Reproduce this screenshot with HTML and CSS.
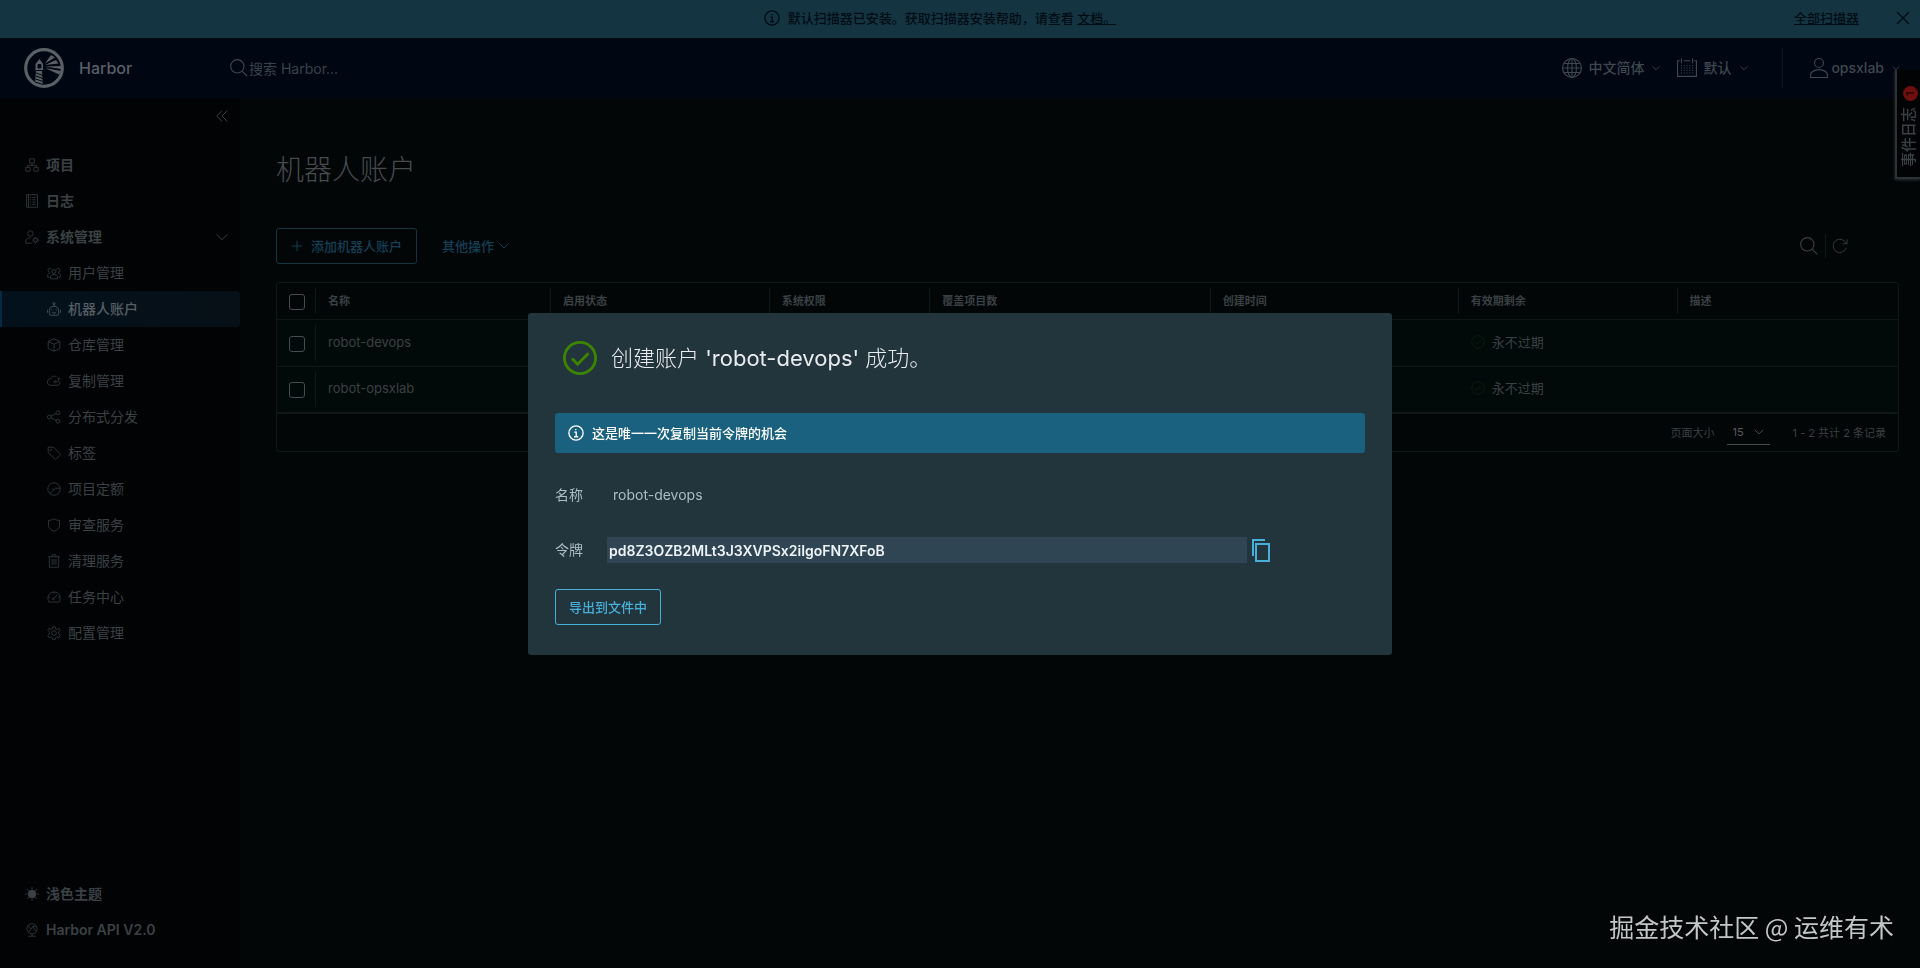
FILE: index.html
```html
<!DOCTYPE html>
<html lang="zh-CN">
<head>
    <meta charset="UTF-8">
    <meta name="viewport" content="width=device-width, initial-scale=1.0">
    <title>Harbor</title>
    <link rel="stylesheet" href="styles.css">
</head>
<body>
    <!-- Scanner notice -->
    <div class="banner">
        <p class="banner-text">
            <svg class="icon icon-16 icon-bold" viewBox="0 0 36 36"><circle cx="18" cy="18" r="16"/><path d="M14 16h4.500v10M13.500 26.500h9.500M17.500 9v3"/></svg>
            <span>默认扫描器已安装。获取扫描器安装帮助，请查看 <a href="#">文档。</a></span>
        </p>
        <a class="banner-link" href="#">全部扫描器</a>
        <button class="banner-close" aria-label="关闭"><svg class="icon icon-16 icon-bold" viewBox="0 0 36 36"><path d="M5 5l26 26M31 5L5 31"/></svg></button>
    </div>

    <header class="header">
        <a class="brand" href="#">
            <svg class="logo" viewBox="0 0 40 40">
                <circle cx="20" cy="20" r="18.300" fill="none" stroke="currentColor" stroke-width="3.200"/>
                <path fill="currentColor" d="M11.500 16l4-5 3.500 5v7h-1l1 15-8-3 1-12h-.500zM21 15.500l6-8.500 4 2.500zM21 17l11-5 2.500 3.500zM21 18.500l16-.500v3zM21 20l16 3-2 3.500z"/>
                <path class="logo-cut" d="M14 16.500h3v3.500h-3zM12 25l7 2.500M12 28l7 2.500M11.500 31l7.500 2.500M11 34l8 2.500M12 22.500h7"/>
            </svg>
            <span>Harbor</span>
        </a>
        <label class="search">
            <svg class="icon icon-20" viewBox="0 0 36 36"><circle cx="15" cy="15" r="12"/><path d="M24 24l9 9"/></svg>
            <input type="text" placeholder="搜索 Harbor..." aria-label="搜索">
        </label>
        <nav class="header-actions">
            <button class="header-btn">
                <svg class="icon icon-20" viewBox="0 0 36 36"><circle cx="18" cy="18" r="17"/><ellipse cx="18" cy="18" rx="8" ry="17"/><path d="M18 1v34M1 18h34M4 10h28M4 26h28"/></svg>
                <span>中文简体</span>
                <svg class="icon icon-8" viewBox="0 0 36 36"><path d="M3 11l15 15 15-15"/></svg>
            </button>
            <button class="header-btn header-btn-date">
                <svg class="icon icon-20" viewBox="0 0 36 36"><path d="M5 5H1v28h34V5h-4M12 5h12M8 1v8M28 1v8"/><path stroke-dasharray="2 3" d="M7 14h23M7 18h23M7 22h23M7 27h23"/></svg>
                <span>默认</span>
                <svg class="icon icon-8" viewBox="0 0 36 36"><path d="M3 11l15 15 15-15"/></svg>
            </button>
            <button class="header-btn header-user">
                <svg class="icon icon-20" viewBox="0 0 36 36"><circle cx="18" cy="9" r="8"/><path d="M3 35v-7c4-5 9-7 15-7s11 2 15 7v7z"/></svg>
                <span>opsxlab</span>
                <svg class="icon icon-8" viewBox="0 0 36 36"><path d="M3 11l15 15 15-15"/></svg>
            </button>
        </nav>
    </header>

    <div class="layout">
        <aside class="sidebar">
            <button class="collapse" aria-label="收起"><svg class="icon icon-12" viewBox="0 0 36 36"><path d="M18 2L2 18l16 16M34 2L18 18l16 16"/></svg></button>
            <nav class="nav">
                <a class="nav-item" href="#"><svg class="icon icon-14" viewBox="0 0 36 36"><path d="M12 2h12v11H12zM2 24h11v10H2zM23 24h11v10H23zM18 13v6M7 24v-5h22v5"/></svg>项目</a>
                <a class="nav-item" href="#"><svg class="icon icon-14" viewBox="0 0 36 36"><path d="M4 2h28v32H4zM9 2v32M13 9h3M19 9h8M13 15h3M19 15h8M13 21h3M19 21h8M13 27h3M19 27h8"/></svg>日志</a>
                <button class="nav-item nav-group">
                    <svg class="icon icon-14" viewBox="0 0 36 36"><circle cx="14" cy="9" r="7"/><path d="M17 34H2v-8c3-4 7-6 13-6"/><circle cx="27" cy="26" r="5"/><path d="M27 18v3M27 31v4M19 26h3M32 26h4M21 20l3 3M30 29l3 3M33 20l-3 3M24 29l-3 3"/></svg>系统管理
                    <svg class="icon icon-12 nav-caret" viewBox="0 0 36 36"><path d="M2 10l16 16 16-16"/></svg>
                </button>
                <a class="nav-item nav-sub" href="#"><svg class="icon icon-14" viewBox="0 0 36 36"><circle cx="18" cy="14" r="5"/><path d="M9 33v-6c2-3 5-5 9-5s7 2 9 5v6zM12 9a5 5 0 1 0-5 7M24 9a5 5 0 1 1 5 7M6 29H2v-7c1-2 3-4 6-4M30 29h4v-7c-1-2-3-4-6-4"/></svg>用户管理</a>
                <a class="nav-item nav-sub active" href="#"><svg class="icon icon-14" viewBox="0 0 36 36"><circle cx="18" cy="4" r="2.500"/><path d="M18 6v5M6 30V22C6 15 11 11 18 11s12 4 12 11v8q0 4-4 4H10q-4 0-4-4zM1 20v8M35 20v8M13 27q5 4 10 0"/><path d="M12 19v3M24 19v3"/></svg>机器人账户</a>
                <a class="nav-item nav-sub" href="#"><svg class="icon icon-14" viewBox="0 0 36 36"><path d="M18 2l15 7v18l-15 7-15-7V9zM3 9l15 7 15-7M18 16v18"/></svg>仓库管理</a>
                <a class="nav-item nav-sub" href="#"><svg class="icon icon-14" viewBox="0 0 36 36"><path d="M25 9C22 4 13 4 10 12c-5 0-9 4-9 9 0 4 3 8 8 8h17c5 0 8-4 7-9M18 20h8q4 0 4-4v-4M22 16l-4 4 4 4M27 14l4-4 4 4"/></svg>复制管理</a>
                <a class="nav-item nav-sub" href="#"><svg class="icon icon-14" viewBox="0 0 36 36"><circle cx="6" cy="18" r="5"/><circle cx="28" cy="7" r="5"/><circle cx="28" cy="29" r="5"/><path d="M10 16l14-7M10 20l14 7"/></svg>分布式分发</a>
                <a class="nav-item nav-sub" href="#"><svg class="icon icon-14" viewBox="0 0 36 36"><path d="M3 3h14l16 17q2 2 0 4l-9 9q-2 2-4 0L3 17z"/><circle cx="10" cy="10" r="1.500"/></svg>标签</a>
                <a class="nav-item nav-sub" href="#"><svg class="icon icon-14" viewBox="0 0 36 36"><circle cx="18" cy="18" r="16"/><path d="M34 16H22L8 29M18 20l-4-3"/></svg>项目定额</a>
                <a class="nav-item nav-sub" href="#"><svg class="icon icon-14" viewBox="0 0 36 36"><path d="M18 2c4 3 9 4 14 4v13c0 7-6 12-14 15C10 31 4 26 4 19V6c5 0 10-1 14-4z"/></svg>审查服务</a>
                <a class="nav-item nav-sub" href="#"><svg class="icon icon-14" viewBox="0 0 36 36"><path d="M3 7h30M6 7v27h24V7M13 7V2h10v5M13 13v15M18 13v15M23 13v15"/></svg>清理服务</a>
                <a class="nav-item nav-sub" href="#"><svg class="icon icon-14" viewBox="0 0 36 36"><path d="M5 31C-2 19 5 5 18 5s20 14 13 26zM17 22l9-9M18 5v4M3 19h4M29 19h4"/><circle cx="16" cy="23" r="2"/></svg>任务中心</a>
                <a class="nav-item nav-sub" href="#"><svg class="icon icon-14" viewBox="0 0 36 36"><circle cx="18" cy="18" r="6"/><path d="M15 2h6l1 5 4 2 5-3 3 5-4 4v5l4 4-3 6-5-2-4 2-1 5h-6l-1-5-4-2-5 2-3-6 4-4v-5l-4-4 3-5 5 3 4-2z"/></svg>配置管理</a>
            </nav>
            <nav class="nav nav-bottom">
                <a class="nav-item" href="#"><svg class="icon icon-14" viewBox="0 0 36 36"><circle cx="18" cy="18" r="10" fill="currentColor"/><path d="M18 0v6M18 30v6M0 18h6M30 18h6M5 5l5 5M26 26l5 5M31 5l-5 5M10 26l-5 5"/></svg>浅色主题</a>
                <a class="nav-item" href="#"><svg class="icon icon-14" viewBox="0 0 36 36"><circle cx="18" cy="15" r="13"/><path d="M8 34h20M18 28v6M8 7l8 8 4-6 8 12M16 15l-6 9M20 9l9-1"/></svg>Harbor API V2.0</a>
            </nav>
        </aside>

        <main class="content">
            <h1>机器人账户</h1>
            <div class="toolbar">
                <button class="btn btn-dim"><svg class="icon icon-12" viewBox="0 0 36 36"><path d="M18 2v32M2 18h32"/></svg>添加机器人账户</button>
                <button class="btn-link">其他操作<svg class="icon icon-12" viewBox="0 0 36 36"><path d="M4 10l14 14 14-14"/></svg></button>
                <div class="tools">
                    <button aria-label="搜索"><svg class="icon icon-20" viewBox="0 0 36 36"><circle cx="15" cy="15" r="12"/><path d="M24 24l9 9"/></svg></button>
                    <button aria-label="刷新"><svg class="icon icon-16" viewBox="0 0 36 36"><path d="M32 22A15 15 0 1 1 29 8l4 5M34 3v10H24"/></svg></button>
                </div>
            </div>

            <div class="datagrid">
                <table>
                    <colgroup>
                        <col class="col-check"><col class="col-name"><col class="col-state"><col class="col-perm">
                        <col class="col-count"><col class="col-time"><col class="col-expire"><col>
                    </colgroup>
                    <thead>
                        <tr>
                            <th><input type="checkbox" aria-label="全选"></th>
                            <th>名称</th>
                            <th>启用状态</th>
                            <th>系统权限</th>
                            <th>覆盖项目数</th>
                            <th>创建时间</th>
                            <th>有效期剩余</th>
                            <th>描述</th>
                        </tr>
                    </thead>
                    <tbody>
                        <tr>
                            <td><input type="checkbox" aria-label="robot-devops"></td>
                            <td>robot-devops</td>
                            <td></td><td></td><td></td><td></td>
                            <td><span class="expire"><svg class="icon icon-14" viewBox="0 0 36 36"><circle cx="18" cy="18" r="16"/><path d="M10 19l5 5 11-11"/></svg>永不过期</span></td>
                            <td></td>
                        </tr>
                        <tr>
                            <td><input type="checkbox" aria-label="robot-opsxlab"></td>
                            <td>robot-opsxlab</td>
                            <td></td><td></td><td></td><td></td>
                            <td><span class="expire"><svg class="icon icon-14" viewBox="0 0 36 36"><circle cx="18" cy="18" r="16"/><path d="M10 19l5 5 11-11"/></svg>永不过期</span></td>
                            <td></td>
                        </tr>
                    </tbody>
                </table>
                <div class="pagination">
                    <label for="page-size">页面大小</label>
                    <span class="select">
                        <select id="page-size"><option>15</option></select>
                        <svg class="icon icon-10" viewBox="0 0 36 36"><path d="M3 10l15 15 15-15"/></svg>
                    </span>
                    <span>1 - 2 共计 2 条记录</span>
                </div>
            </div>
        </main>
    </div>

    <button class="event-tab"><span class="event-text">事件日志</span><span class="event-badge">1</span></button>

    <!-- Token dialog -->
    <div class="backdrop">
        <div class="modal" role="dialog" aria-modal="true" aria-labelledby="modal-title">
            <div class="modal-header">
                <svg class="icon success" viewBox="0 0 36 36"><circle cx="18" cy="18" r="16.500"/><path d="M9.500 18.500l6 6L27 13"/></svg>
                <h2 id="modal-title">创建账户 <span class="account">'robot-devops'</span> 成功。</h2>
            </div>
            <div class="alert">
                <svg class="icon icon-16 icon-bold" viewBox="0 0 36 36"><circle cx="18" cy="18" r="16"/><path d="M14 16h4.500v10M13.500 26.500h9.500M17.500 9v3"/></svg>
                <span>这是唯一一次复制当前令牌的机会</span>
            </div>
            <div class="field">
                <span class="field-label">名称</span>
                <span class="field-value">robot-devops</span>
            </div>
            <div class="field">
                <label class="field-label" for="token">令牌</label>
                <input class="token" id="token" type="text" readonly value="pd8Z3OZB2MLt3J3XVPSx2iIgoFN7XFoB">
                <button class="copy" aria-label="复制"><svg class="icon" viewBox="0 0 20 24"><path d="M2 18V2h12M5 6h13v17H5z"/></svg></button>
            </div>
            <button class="btn">导出到文件中</button>
        </div>
    </div>

    <div class="watermark">掘金技术社区 @ 运维有术</div>
</body>
</html>
```

FILE: styles.css
```css
* {
    margin: 0;
    padding: 0;
    box-sizing: border-box;
}
body {
    display: flex;
    flex-direction: column;
    min-height: 100vh;
    background: #020607;
    color: #3a4144;
    font-family: Inter, "Noto Sans CJK SC", sans-serif;
    font-size: 14px;
    line-height: 20px;
}
button, input, select {
    font: inherit;
    color: inherit;
    background: none;
    border: none;
    outline: none;
}
button {
    cursor: pointer;
}
a {
    color: inherit;
    text-decoration: none;
}
.icon {
    flex: none;
    fill: none;
    stroke: currentColor;
    stroke-width: 2;
}
.icon-bold { stroke-width: 3; }
.icon-8 { width: 8px; height: 8px; stroke-width: 4; }
.icon-10 { width: 10px; height: 10px; stroke-width: 3; }
.icon-12 { width: 12px; height: 12px; stroke-width: 3; }
.icon-14 { width: 14px; height: 14px; }
.icon-16 { width: 16px; height: 16px; }
.icon-20 { width: 20px; height: 20px; }

/* banner */
.banner {
    display: grid;
    grid-template-columns: 1fr auto 1fr 40px;
    align-items: center;
    height: 38px;
    padding-bottom: 2px;
    background: #143442;
    color: #000c14;
    font-size: 13px;
    font-weight: 500;
}
.banner-text {
    grid-column: 2;
    display: flex;
    align-items: center;
    gap: 8px;
}
.banner a {
    text-decoration: underline;
}
.banner-link {
    justify-self: end;
    margin-right: 21px;
}
.banner-close {
    display: flex;
    justify-content: center;
    justify-self: end;
    width: 34px;
}

/* header */
.header {
    display: flex;
    align-items: center;
    height: 60px;
    padding-left: 24px;
    background: #000612;
    color: #3f474f;
}
.brand {
    display: flex;
    align-items: center;
    gap: 15px;
    width: 205px;
    color: #596066;
    font-size: 16px;
    font-weight: 500;
}
.logo {
    width: 40px;
    height: 40px;
}
.logo-cut {
    fill: #000612;
    stroke: #000612;
}
.search {
    display: flex;
    align-items: center;
    flex: 1;
}
.search input {
    width: 240px;
    padding-top: 2px;
}
.search input::placeholder {
    color: #3a424a;
}
.header-actions {
    display: flex;
    align-items: center;
}
.header-btn {
    display: flex;
    align-items: center;
    gap: 6px;
    height: 40px;
    font-weight: 500;
}
.header-btn .icon-8 {
    margin-left: 2px;
}
.header-btn-date {
    margin-left: 17px;
    padding-right: 34px;
}
.header-btn-date span {
    margin-right: 1px;
}
.header-user {
    gap: 2px;
    padding: 0 20px 0 26px;
    border-left: 1px solid #10161f;
}
.header-user .icon-8 {
    margin-left: 6px;
}

/* sidebar */
.layout {
    display: flex;
    flex: 1;
}
.sidebar {
    display: flex;
    flex-direction: column;
    width: 240px;
    padding-bottom: 20px;
    background: #010304;
}
.collapse {
    display: flex;
    align-self: flex-end;
    padding: 12px;
    margin-bottom: 13px;
}
.nav-item {
    display: flex;
    align-items: center;
    gap: 7px;
    width: 100%;
    height: 36px;
    padding: 0 12px 0 25px;
    font-weight: 600;
    text-align: left;
}
.nav-caret {
    margin-left: auto;
}
.nav-sub {
    padding-left: 47px;
    font-weight: 400;
}
.nav-sub.active {
    background: linear-gradient(90deg, #03111c, #071017);
    border-radius: 0 4px 4px 0;
    box-shadow: inset 2px 0 #052a42;
    color: #555e64;
    font-weight: 500;
}
.nav-bottom {
    margin-top: auto;
}

/* content */
.content {
    flex: 1;
    padding: 52px 21px 24px 36px;
}
h1 {
    color: #454b4e;
    font-size: 28px;
    font-weight: 300;
    line-height: 40px;
}
.toolbar {
    display: flex;
    align-items: center;
    margin: 38px 0 18px;
}
.btn {
    display: inline-flex;
    align-items: center;
    gap: 8px;
    height: 36px;
    padding: 0 13px;
    border: 1px solid #49afd9;
    border-radius: 3px;
    color: #49afd9;
    font-size: 13px;
    font-weight: 500;
}
.btn-dim {
    padding: 0 14px;
    border-color: #153441;
    color: #153f55;
}
.btn-link {
    display: flex;
    align-items: center;
    gap: 4px;
    margin-left: 25px;
    color: #153f55;
    font-size: 13px;
    font-weight: 500;
}
.tools {
    display: flex;
    align-items: center;
    margin-left: auto;
    padding-right: 51px;
}
.tools button {
    display: flex;
    align-items: center;
    height: 24px;
    padding-right: 6px;
}
.tools button + button {
    padding: 0 0 0 6px;
    border-left: 1px solid #13191b;
}

.datagrid {
    border: 1px solid #0f1719;
    border-radius: 3px;
}
table {
    width: 100%;
    border-collapse: collapse;
    table-layout: fixed;
}
.col-check { width: 39px; }
.col-name { width: 14.5%; }
.col-state { width: 13.5%; }
.col-perm { width: 9.9%; }
.col-count { width: 17.3%; }
.col-time { width: 15.3%; }
.col-expire { width: 13.5%; }
th, td {
    padding: 0 12px;
    text-align: left;
    border-bottom: 1px solid #0f1719;
}
th {
    height: 36px;
    font-size: 11px;
    font-weight: 600;
    background: linear-gradient(#0f1719, #0f1719) right center / 1px 26px no-repeat;
}
th:last-child {
    background: none;
}
td {
    height: 47px;
    padding-bottom: 2px;
    background: #020909;
    font-size: 13px;
}
th:first-child, td:first-child {
    padding: 0;
    text-align: center;
}
td:first-child {
    background: linear-gradient(#0f1719, #0f1719) right center / 1px 36px no-repeat #020909;
}
tbody tr:last-child td {
    border-bottom-width: 2px;
}
input[type="checkbox"] {
    appearance: none;
    display: block;
    width: 16px;
    height: 16px;
    margin: 2px auto 0;
    border: 1px solid #454c50;
    border-radius: 3px;
}
.expire {
    display: flex;
    align-items: center;
    gap: 7px;
}
.expire .icon {
    color: #0a240c;
}
.pagination {
    display: flex;
    align-items: center;
    justify-content: flex-end;
    height: 37px;
    padding-right: 12px;
    font-size: 11px;
}
.select {
    display: flex;
    align-items: center;
    width: 43px;
    height: 24px;
    margin: 0 23px 0 12px;
    padding: 0 6px;
    border-bottom: 1px solid #454c50;
    color: #555c60;
}
.select select {
    flex: 1;
    min-width: 0;
    appearance: none;
}

/* event log tab */
.event-tab {
    position: fixed;
    top: 70px;
    right: 0;
    display: flex;
    flex-direction: column-reverse;
    align-items: center;
    justify-content: flex-end;
    gap: 6px;
    width: 25px;
    height: 109px;
    padding-top: 16px;
    background: #010304;
    border-left: 2px solid #2d3335;
    border-bottom: 2px solid #2d3335;
    box-shadow: 0 1px 3px #2d3335;
    clip-path: inset(0 0 -5px -5px);
}
.event-text {
    writing-mode: vertical-rl;
    text-orientation: sideways;
    transform: rotate(180deg);
    font-size: 15px;
    font-weight: 500;
}
.event-badge {
    width: 15px;
    height: 15px;
    margin-left: 4px;
    border-radius: 50%;
    background: #6c0f0d;
    color: #1c0202;
    font-size: 10px;
    font-weight: 600;
    line-height: 15px;
    transform: rotate(-90deg);
}

/* modal */
.backdrop {
    position: fixed;
    inset: 0;
    display: flex;
    align-items: center;
    justify-content: center;
}
.modal {
    width: 45%;
    padding: 27px;
    padding-bottom: 30px;
    background: #22343c;
    border-radius: 3px;
    color: #adbbc4;
}
.modal-header {
    display: flex;
    align-items: center;
    gap: 14px;
    height: 36px;
    margin-bottom: 37px;
    padding-left: 7px;
}
.success {
    width: 34px;
    height: 34px;
    margin-left: 1px;
    color: #3c8500;
    stroke-width: 3;
}
h2 {
    color: #e9ecef;
    font-size: 22px;
    font-weight: 300;
    line-height: 32px;
}
.account {
    font-weight: 400;
}
.alert {
    display: flex;
    align-items: center;
    gap: 8px;
    height: 40px;
    margin-bottom: 29px;
    padding: 0 13px 1px;
    background: #1a607f;
    border-radius: 3px;
    color: #fff;
    font-size: 13px;
    font-weight: 500;
}
.field {
    display: flex;
    align-items: center;
    height: 26px;
    margin-bottom: 29px;
}
.field-label {
    width: 52px;
}
.field-value {
    padding-left: 6px;
}
.token {
    width: 79%;
    height: 26px;
    padding: 0 2px;
    background: #2f4553;
    color: #eef3f6;
    font-weight: 600;
}
.copy {
    display: flex;
    margin-left: 4px;
    color: #49afd9;
}
.copy .icon {
    width: 20px;
    height: 24px;
}
.modal > .btn {
    margin-top: -3px;
}

.watermark {
    position: fixed;
    right: 26px;
    bottom: 24px;
    color: #c5c7c7;
    font-family: "Noto Sans CJK SC", sans-serif;
    font-size: 25px;
    line-height: 36px;
}
```
